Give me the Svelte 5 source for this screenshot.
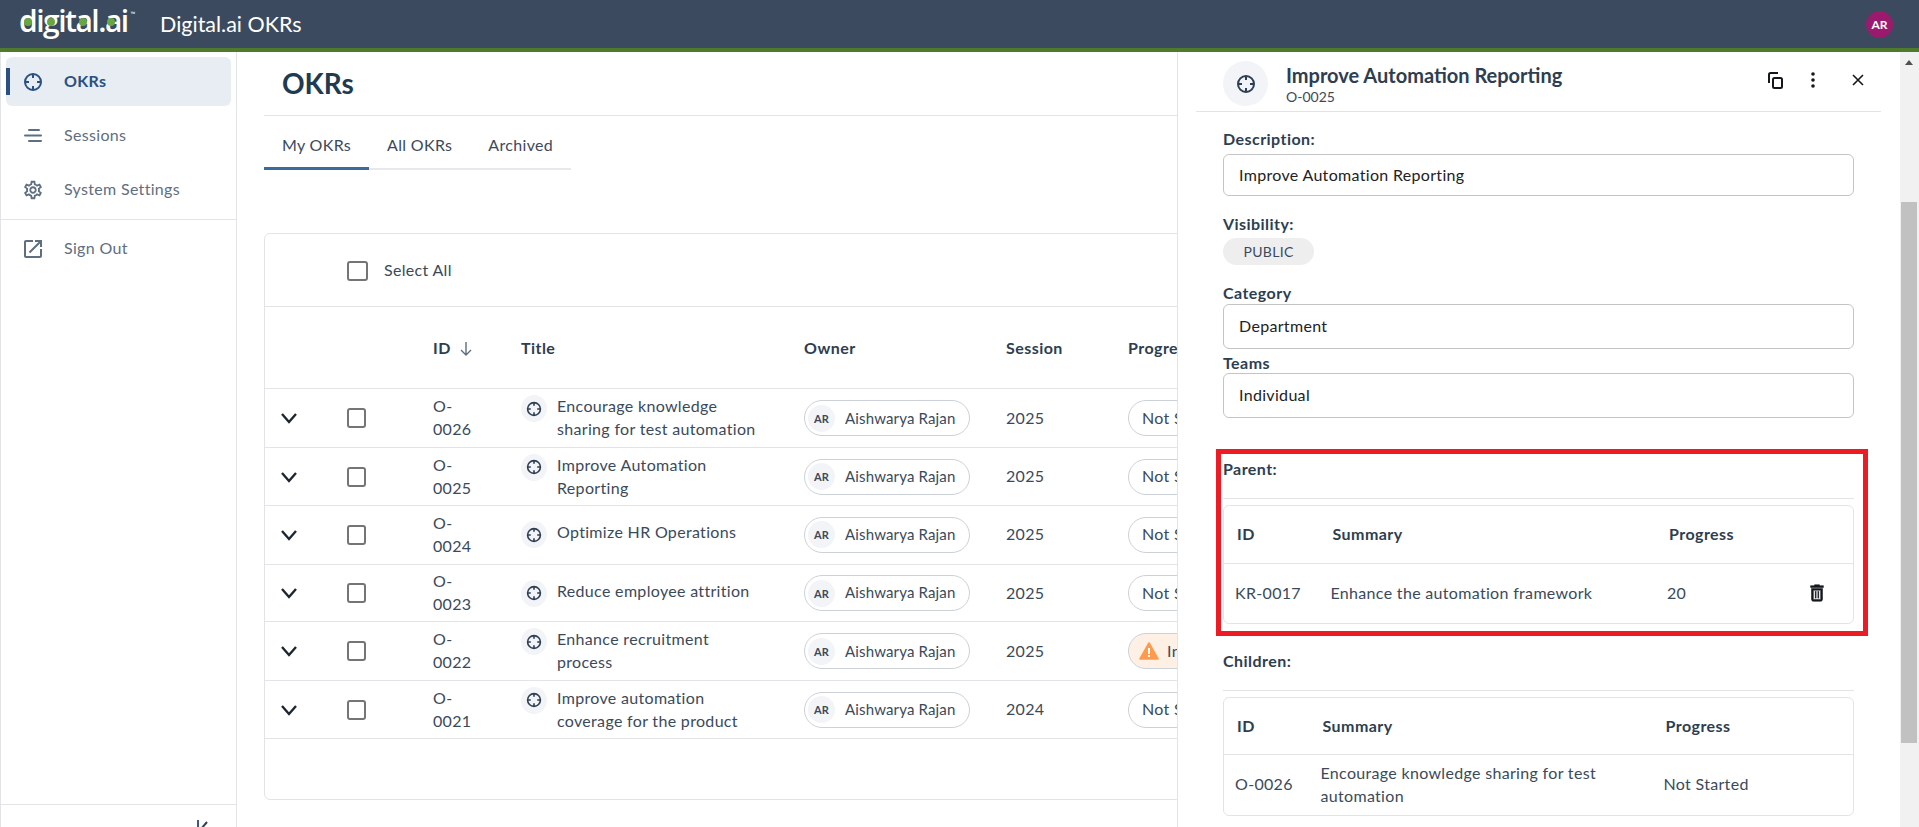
<script lang="ts">
  type Row = { id: string; title: string; session: string; progress: string };

  const rows: Row[] = [
    { id: "O-0026", title: "Encourage knowledge sharing for test automation", session: "2025", progress: "Not Started" },
    { id: "O-0025", title: "Improve Automation Reporting", session: "2025", progress: "Not Started" },
    { id: "O-0024", title: "Optimize HR Operations", session: "2025", progress: "Not Started" },
    { id: "O-0023", title: "Reduce employee attrition", session: "2025", progress: "Not Started" },
    { id: "O-0022", title: "Enhance recruitment process", session: "2025", progress: "In Progress" },
    { id: "O-0021", title: "Improve automation coverage for the product", session: "2024", progress: "Not Started" }
  ];

  const gear =
    "M19.43 12.98c.04-.32.07-.64.07-.98 0-.34-.03-.66-.07-.98l2.11-1.65c.19-.15.24-.42.12-.64l-2-3.46c-.09-.16-.26-.25-.44-.25-.06 0-.12.01-.17.03l-2.49 1c-.52-.4-1.08-.73-1.69-.98l-.38-2.65C14.46 2.18 14.25 2 14 2h-4c-.25 0-.46.18-.49.42l-.38 2.65c-.61.25-1.17.59-1.69.98l-2.49-1c-.06-.02-.12-.03-.18-.03-.17 0-.34.09-.43.25l-2 3.46c-.13.22-.07.49.12.64l2.11 1.65c-.04.32-.07.65-.07.98 0 .33.03.66.07.98l-2.11 1.65c-.19.15-.24.42-.12.64l2 3.46c.09.16.26.25.44.25.06 0 .12-.01.17-.03l2.49-1c.52.4 1.08.73 1.69.98l.38 2.65c.03.24.24.42.49.42h4c.25 0 .46-.18.49-.42l.38-2.65c.61-.25 1.17-.59 1.69-.98l2.49 1c.06.02.12.03.18.03.17 0 .34-.09.43-.25l2-3.46c.12-.22.07-.49-.12-.64l-2.11-1.65zm-1.98-1.71c.04.31.05.52.05.73 0 .21-.02.43-.05.73l-.14 1.13.89.7 1.08.84-.7 1.21-1.27-.51-1.04-.42-.9.68c-.43.32-.84.56-1.25.73l-1.06.43-.16 1.13-.2 1.35h-1.4l-.19-1.35-.16-1.13-1.06-.43c-.43-.18-.83-.41-1.23-.71l-.91-.7-1.06.43-1.27.51-.7-1.21 1.08-.84.89-.7-.14-1.13c-.03-.31-.05-.54-.05-.74s.02-.43.05-.73l.14-1.13-.89-.7-1.08-.84.7-1.21 1.27.51 1.04.42.9-.68c.43-.32.84-.56 1.25-.73l1.06-.43.16-1.13.2-1.35h1.39l.19 1.35.16 1.13 1.06.43c.43.18.83.41 1.23.71l.91.7 1.06-.43 1.27-.51.7 1.21-1.07.85-.89.7.14 1.13zM12 8c-2.21 0-4 1.79-4 4s1.79 4 4 4 4-1.79 4-4-1.79-4-4-4zm0 6c-1.1 0-2-.9-2-2s.9-2 2-2 2 .9 2 2-.9 2-2 2z";
</script>

{#snippet target(size: number)}
  <svg width={size} height={size} viewBox="0 0 20 20" fill="none" stroke="currentColor" stroke-width="2">
    <circle cx="10" cy="10" r="8" />
    <path d="M10 2v4M10 14v4M2 10h4M14 10h4" />
  </svg>
{/snippet}

<div class="page">
  <header class="topbar">
    <div class="logo">digital.ai<sup>™</sup><i class="dot d1"></i><i class="dot d2"></i><i class="dot d3"></i><i class="dot d4"></i></div>
    <div class="app-name">Digital.ai OKRs</div>
    <div class="me">AR</div>
  </header>

  <div class="body">
    <nav class="sidebar">
      <a class="nav-item active">
        <span class="nav-icon">{@render target(20)}</span>
        <span class="nav-text">OKRs</span>
      </a>
      <a class="nav-item">
        <span class="nav-icon">
          <svg width="20" height="20" viewBox="0 0 20 20" fill="currentColor">
            <rect x="5" y="3" width="12" height="2" rx="1" />
            <rect x="1" y="8.500" width="18" height="2" rx="1" />
            <rect x="5" y="14" width="14" height="2" rx="1" />
          </svg>
        </span>
        <span class="nav-text">Sessions</span>
      </a>
      <a class="nav-item">
        <span class="nav-icon">
          <svg width="22" height="22" viewBox="0 0 24 24" fill="currentColor"><path d={gear} /></svg>
        </span>
        <span class="nav-text">System Settings</span>
      </a>
      <div class="nav-sep"></div>
      <a class="nav-item">
        <span class="nav-icon">
          <svg width="24" height="24" viewBox="0 0 24 24" fill="currentColor">
            <path d="M19 19H5V5h7V3H5c-1.11 0-2 .9-2 2v14c0 1.1.89 2 2 2h14c1.1 0 2-.9 2-2v-7h-2v7zM14 3v2h3.59l-9.83 9.83 1.41 1.41L19 6.41V10h2V3h-7z" />
          </svg>
        </span>
        <span class="nav-text">Sign Out</span>
      </a>
      <div class="side-foot">
        <svg width="14" height="20" viewBox="0 0 14 20" fill="none" stroke-width="2">
          <path d="M2 0v20" stroke="#3d5a80" />
          <path d="M11 2L5 9l6 7" stroke="#33414f" />
        </svg>
      </div>
    </nav>

    <main class="main">
      <h1>OKRs</h1>
      <div class="tabs">
        <span class="tab on">My OKRs</span>
        <span class="tab">All OKRs</span>
        <span class="tab">Archived</span>
      </div>

      <section class="card">
        <div class="select-bar">
          <span class="box big"></span>
          <span>Select All</span>
        </div>
        <table class="okrs">
          <colgroup>
            <col style="width: 66px" />
            <col style="width: 86px" />
            <col style="width: 88px" />
            <col style="width: 283px" />
            <col style="width: 202px" />
            <col style="width: 122px" />
            <col style="width: 300px" />
          </colgroup>
          <thead>
            <tr>
              <th></th>
              <th></th>
              <th class="nowrap">
                ID
                <svg class="sort" width="14" height="16" viewBox="0 0 14 16" fill="none" stroke="#5f6e80" stroke-width="1.4">
                  <path d="M7 1v13M2 9l5 5 5-5" />
                </svg>
              </th>
              <th>Title</th>
              <th>Owner</th>
              <th>Session</th>
              <th>Progress</th>
            </tr>
          </thead>
          <tbody>
            {#each rows as row}
              <tr>
                <td class="chev">
                  <svg width="18" height="12" viewBox="0 0 18 12" fill="none" stroke="#1c2530" stroke-width="2.4">
                    <path d="M2 2l7 8 7-8" />
                  </svg>
                </td>
                <td><span class="box"></span></td>
                <td class="id-cell">{row.id}</td>
                <td>
                  <div class="title-cell">
                    <span class="okr-icon">{@render target(16)}</span>
                    <span class="title-text">{row.title}</span>
                  </div>
                </td>
                <td>
                  <span class="owner">
                    <span class="owner-av">AR</span>
                    <span>Aishwarya Rajan</span>
                  </span>
                </td>
                <td>{row.session}</td>
                <td>
                  <span class="state" class:warn={row.progress === "In Progress"}>
                    {#if row.progress === "In Progress"}
                      <svg width="20" height="18" viewBox="0 0 20 18">
                        <path d="M10 1L19 17H1z" fill="#ff9a4d" stroke="#ff9a4d" stroke-width="1.6" stroke-linejoin="round" />
                        <rect x="9" y="6" width="2" height="6" fill="#fff" />
                        <rect x="9" y="13" width="2" height="2" fill="#fff" />
                      </svg>
                    {/if}
                    {row.progress}
                  </span>
                </td>
              </tr>
            {/each}
          </tbody>
        </table>
      </section>
    </main>

    <aside class="panel">
      <div class="panel-content">
        <div class="panel-head">
          <span class="panel-icon">{@render target(20)}</span>
          <div class="panel-titles">
            <div class="panel-title">Improve Automation Reporting</div>
            <div class="panel-id">O-0025</div>
          </div>
          <div class="panel-actions">
            <svg class="a-copy" width="18" height="18" viewBox="0 0 18 18" fill="none" stroke="#14181d" stroke-width="2">
              <path d="M3 12V3.500A1.500 1.500 0 0 1 4.500 2H12" />
              <rect x="7" y="7" width="9" height="10" rx="1.500" />
            </svg>
            <svg class="a-dots" width="6" height="18" viewBox="0 0 6 18" fill="#14181d">
              <circle cx="3" cy="3" r="1.800" />
              <circle cx="3" cy="9" r="1.800" />
              <circle cx="3" cy="15" r="1.800" />
            </svg>
            <svg class="a-close" width="12" height="12" viewBox="0 0 12 12" fill="none" stroke="#14181d" stroke-width="1.600">
              <path d="M1 1l10 10M11 1L1 11" />
            </svg>
          </div>
        </div>

        <div class="label first">Description:</div>
        <div class="input short">Improve Automation Reporting</div>

        <div class="label vis">Visibility:</div>
        <div class="chip">PUBLIC</div>

        <div class="label cat">Category</div>
        <div class="input">Department</div>

        <div class="label teams">Teams</div>
        <div class="input">Individual</div>

        <section class="rel parent">
          <div class="rel-label">Parent:</div>
          <div class="mini">
            <table>
              <colgroup>
                <col style="width: 95.500px" />
                <col style="width: 336.500px" />
                <col style="width: 120px" />
                <col />
              </colgroup>
              <thead>
                <tr><th>ID</th><th>Summary</th><th>Progress</th><th></th></tr>
              </thead>
              <tbody>
                <tr>
                  <td>KR-0017</td>
                  <td>Enhance the automation framework</td>
                  <td>20</td>
                  <td class="trash">
                    <svg width="22" height="22" viewBox="0 0 24 24" fill="#14181d" stroke="#14181d" stroke-width="0.6">
                      <path d="M16 9v10H8V9h8m-1.500-6h-5l-1 1H5v2h14V4h-3.500l-1-1zM18 7H6v12c0 1.100.9 2 2 2h8c1.100 0 2-.9 2-2V7z" />
                      <rect x="10" y="10.500" width="1" height="7" />
                      <rect x="13" y="10.500" width="1" height="7" />
                    </svg>
                  </td>
                </tr>
              </tbody>
            </table>
          </div>
          <div class="callout"></div>
        </section>

        <section class="rel children">
          <div class="rel-label">Children:</div>
          <div class="mini">
            <table>
              <colgroup>
                <col style="width: 85.500px" />
                <col style="width: 343px" />
                <col />
              </colgroup>
              <thead>
                <tr><th>ID</th><th>Summary</th><th>Progress</th></tr>
              </thead>
              <tbody>
                <tr>
                  <td>O-0026</td>
                  <td>Encourage knowledge sharing for test automation</td>
                  <td>Not Started</td>
                </tr>
              </tbody>
            </table>
          </div>
        </section>
      </div>

      <div class="scroll">
        <span class="scroll-up"></span>
        <span class="scroll-thumb"></span>
      </div>
    </aside>
  </div>
</div>

<style>
  :global(body) {
    margin: 0;
    background: #fff;
  }
  .page {
    height: 827px;
    overflow: hidden;
    display: flex;
    flex-direction: column;
    font-family: Lato, "Liberation Sans", sans-serif;
    font-size: 16px;
    line-height: 1.43;
    letter-spacing: 0.32px;
    color: #3b4a5a;
  }

  .topbar {
    flex: none;
    height: 48px;
    display: flex;
    align-items: center;
    background: #3b4a5e;
    border-bottom: 4px solid #4f7a2e;
    color: #fff;
  }
  .logo {
    position: relative;
    width: 140px;
    padding: 0 0 6px 19px;
    box-sizing: border-box;
    font-family: "Open Sans", sans-serif;
    font-size: 30px;
    font-weight: 600;
    letter-spacing: -1.5px;
    line-height: 30px;
    white-space: nowrap;
  }
  .logo sup {
    font-size: 6px;
    font-weight: 400;
    letter-spacing: 0;
    vertical-align: 16px;
    line-height: 0;
    margin-left: 3px;
  }
  .dot {
    position: absolute;
    top: 12px;
    width: 8px;
    height: 8px;
    border-radius: 50%;
    background: #6aa543;
  }
  .d1 { left: 23.5px; }
  .d2 { left: 47px; }
  .d3 { left: 79px; }
  .d4 { left: 107px; }
  .app-name {
    margin-left: 20px;
    font-size: 21.5px;
    letter-spacing: 0;
  }
  .me {
    margin-left: auto;
    margin-right: 26px;
    width: 27px;
    height: 27px;
    border-radius: 50%;
    background: #9c1a6e;
    font-size: 12px;
    font-weight: 700;
    line-height: 27px;
    text-align: center;
    letter-spacing: 0;
  }

  .body {
    position: relative;
    flex: 1;
    display: flex;
    min-height: 0;
  }

  .sidebar {
    flex: none;
    width: 237px;
    box-sizing: border-box;
    display: flex;
    flex-direction: column;
    border-left: 1px solid #e2e4e8;
    border-right: 1px solid #e2e4e8;
    padding-top: 5px;
  }
  .nav-item {
    position: relative;
    display: flex;
    align-items: center;
    height: 49px;
    margin: 0 5px 5px;
    padding-left: 12px;
    border-radius: 6px;
    color: #5f6e80;
  }
  .nav-icon {
    flex: none;
    width: 30px;
    display: flex;
    justify-content: center;
  }
  .nav-text {
    margin-left: 16px;
  }
  .nav-item.active {
    background: #e8edf4;
    color: #2a5082;
    font-weight: 700;
  }
  .nav-item.active::before {
    content: "";
    position: absolute;
    left: 0;
    top: 11px;
    width: 4px;
    height: 27px;
    background: #2a5082;
  }
  .nav-sep {
    height: 1px;
    margin: 0 0 4px;
    background: #e2e4e8;
  }
  .side-foot {
    margin-top: auto;
    height: 23px;
    box-sizing: border-box;
    border-top: 1px solid #e2e4e8;
    padding: 15px 0 0 195px;
    overflow: hidden;
  }

  .main {
    flex: 1;
    min-width: 0;
    padding: 0 20px 0 27px;
  }
  h1 {
    margin: 0;
    height: 64px;
    box-sizing: border-box;
    padding: 12px 0 0 18px;
    border-bottom: 1px solid #e2e4e8;
    font-size: 28px;
    line-height: 38px;
    font-weight: 700;
    letter-spacing: 0;
    color: #1f3b50;
  }
  .tabs {
    display: inline-flex;
    border-bottom: 2px solid #e6e8ec;
    vertical-align: top;
  }
  .tab {
    padding: 18px 18px 10px;
    margin-bottom: -2px;
    border-bottom: 3px solid transparent;
  }
  .tab.on {
    border-bottom-color: #3d6a9a;
  }

  .card {
    margin-top: 63px;
    height: 567px;
    box-sizing: border-box;
    border: 1px solid #e2e4e8;
    border-radius: 6px;
    overflow: hidden;
  }
  .select-bar {
    height: 70px;
    padding-top: 2px;
    display: flex;
    align-items: center;
    gap: 16px;
    padding-left: 82px;
    border-bottom: 1px solid #e2e4e8;
  }
  .box {
    display: block;
    box-sizing: border-box;
    width: 19px;
    height: 20px;
    border: 2px solid #757575;
    border-radius: 3px;
  }
  .box.big {
    width: 21px;
  }

  .okrs {
    table-layout: fixed;
    border-collapse: collapse;
    width: 1147px;
  }
  .okrs th {
    height: 82px;
    padding: 2px 16px 0;
    box-sizing: border-box;
    text-align: left;
    font-weight: 700;
    letter-spacing: 0.45px;
    color: #2d3e50;
    border-bottom: 1px solid #e2e4e8;
  }
  .okrs td {
    padding: 6px 16px;
    border-bottom: 1px solid #e2e4e8;
  }
  /* rows come out 58.67px tall on average: alternate 59 and 58 */
  .okrs tbody tr:nth-child(even) td {
    padding-top: 5.5px;
    padding-bottom: 5.5px;
  }
  .okrs td.chev {
    padding-right: 0;
    padding-left: 15px;
  }
  .chev svg {
    display: block;
  }
  .nowrap {
    white-space: nowrap;
  }
  .sort {
    margin-left: 4px;
    vertical-align: -3px;
  }
  .okrs td.id-cell {
    padding-right: 30px;
  }
  .title-cell {
    display: flex;
    gap: 10px;
  }
  .okr-icon {
    flex: none;
    width: 26px;
    height: 27px;
    display: flex;
    align-items: center;
    justify-content: center;
    border-radius: 50%;
    background: #f2f4f7;
    color: #2f3e52;
  }
  .title-text {
    max-width: 205px;
  }
  .owner {
    display: inline-flex;
    align-items: center;
    height: 36px;
    width: 166px;
    box-sizing: border-box;
    border: 1px solid #ccd1d8;
    border-radius: 18px;
    padding-left: 3px;
    gap: 10px;
    font-size: 15px;
    letter-spacing: 0.15px;
    white-space: nowrap;
    vertical-align: middle;
  }
  .owner-av {
    width: 27px;
    height: 27px;
    border-radius: 50%;
    background: #f2f4f7;
    font-size: 11px;
    font-weight: 700;
    line-height: 27px;
    text-align: center;
  }
  .state {
    display: inline-flex;
    align-items: center;
    gap: 8px;
    height: 36px;
    box-sizing: border-box;
    border: 1px solid #ccd1d8;
    border-radius: 18px;
    padding: 0 13px;
    white-space: nowrap;
    vertical-align: middle;
  }
  .state.warn {
    padding-left: 10px;
    background: #fff0e6;
  }

  .panel {
    position: absolute;
    top: 0;
    right: 0;
    bottom: 0;
    width: 742px;
    box-sizing: border-box;
    display: flex;
    background: #fff;
    border-left: 1px solid #e2e4e8;
  }
  .panel-content {
    flex: 1;
    min-width: 0;
    padding: 0 46px 0 45px;
    overflow: hidden;
  }
  .panel-head {
    display: flex;
    align-items: flex-start;
    height: 50px;
    margin: 0 -27px;
    padding: 9px 0 0 27px;
    border-bottom: 1px solid #e2e4e8;
  }
  .panel-icon {
    flex: none;
    width: 45px;
    height: 45px;
    display: flex;
    align-items: center;
    justify-content: center;
    border-radius: 50%;
    background: #f2f4f7;
    color: #2f3e52;
  }
  .panel-titles {
    margin-left: 18px;
  }
  .panel-title {
    font-size: 20px;
    font-weight: 700;
    line-height: 26px;
    margin-top: 1px;
    letter-spacing: 0;
    color: #2d3e50;
  }
  .panel-id {
    font-size: 14px;
    line-height: 18px;
    letter-spacing: 0;
  }
  .panel-actions {
    margin-left: auto;
    display: flex;
    align-items: center;
    height: 18px;
    margin-top: 10px;
    padding-right: 17px;
  }
  .a-dots {
    margin-left: 26px;
  }
  .a-close {
    margin-left: 36px;
  }

  .label {
    font-weight: 700;
    line-height: 20px;
    letter-spacing: 0.45px;
    color: #2d3e50;
  }
  .label.first {
    margin: 17px 0 5px;
  }
  .label.vis {
    margin: 18px 0 4px;
  }
  .label.cat {
    margin: 18px 0 1px;
  }
  .label.teams {
    margin-top: 4px;
  }
  .input {
    height: 45px;
    box-sizing: border-box;
    display: flex;
    align-items: center;
    padding-left: 15px;
    border: 1px solid #c4c4c4;
    border-radius: 6px;
    color: #222;
  }
  .input.short {
    height: 42px;
  }
  .chip {
    width: 91px;
    height: 27px;
    border-radius: 14px;
    background: #eeeeee;
    text-align: center;
    line-height: 27px;
    font-size: 14px;
  }

  .rel {
    position: relative;
  }
  .rel.parent {
    margin-top: 41px;
  }
  .rel.children {
    margin-top: 27px;
  }
  .rel-label {
    height: 40px;
    box-sizing: border-box;
    line-height: 20px;
    font-weight: 700;
    letter-spacing: 0.45px;
    color: #2d3e50;
    border-bottom: 1px solid #e2e4e8;
    margin-bottom: 6px;
  }
  .mini {
    border: 1px solid #e2e4e8;
    border-radius: 6px;
    overflow: hidden;
  }
  .mini table {
    table-layout: fixed;
    width: 100%;
    border-collapse: collapse;
  }
  .mini th {
    height: 57px;
    box-sizing: border-box;
    padding: 1px 0 0 13px;
    text-align: left;
    font-weight: 700;
    letter-spacing: 0.45px;
    color: #2d3e50;
    border-bottom: 1px solid #e2e4e8;
  }
  .mini td {
    padding: 7px 0 7px 11px;
    height: 45px;
  }
  .mini td.trash {
    padding-left: 30px;
  }
  .trash svg {
    display: block;
  }
  .callout {
    position: absolute;
    left: -7px;
    right: -14px;
    top: -10px;
    bottom: -12px;
    border: 5px solid #ed1c24;
    pointer-events: none;
  }

  .scroll {
    position: relative;
    flex: none;
    width: 19px;
    background: #f1f1f1;
  }
  .scroll-up {
    position: absolute;
    left: 5px;
    top: 8px;
    border-left: 4.500px solid transparent;
    border-right: 4.500px solid transparent;
    border-bottom: 5px solid #505050;
  }
  .scroll-thumb {
    position: absolute;
    left: 1px;
    right: 2px;
    top: 150px;
    height: 541px;
    background: #c1c1c1;
  }
</style>
